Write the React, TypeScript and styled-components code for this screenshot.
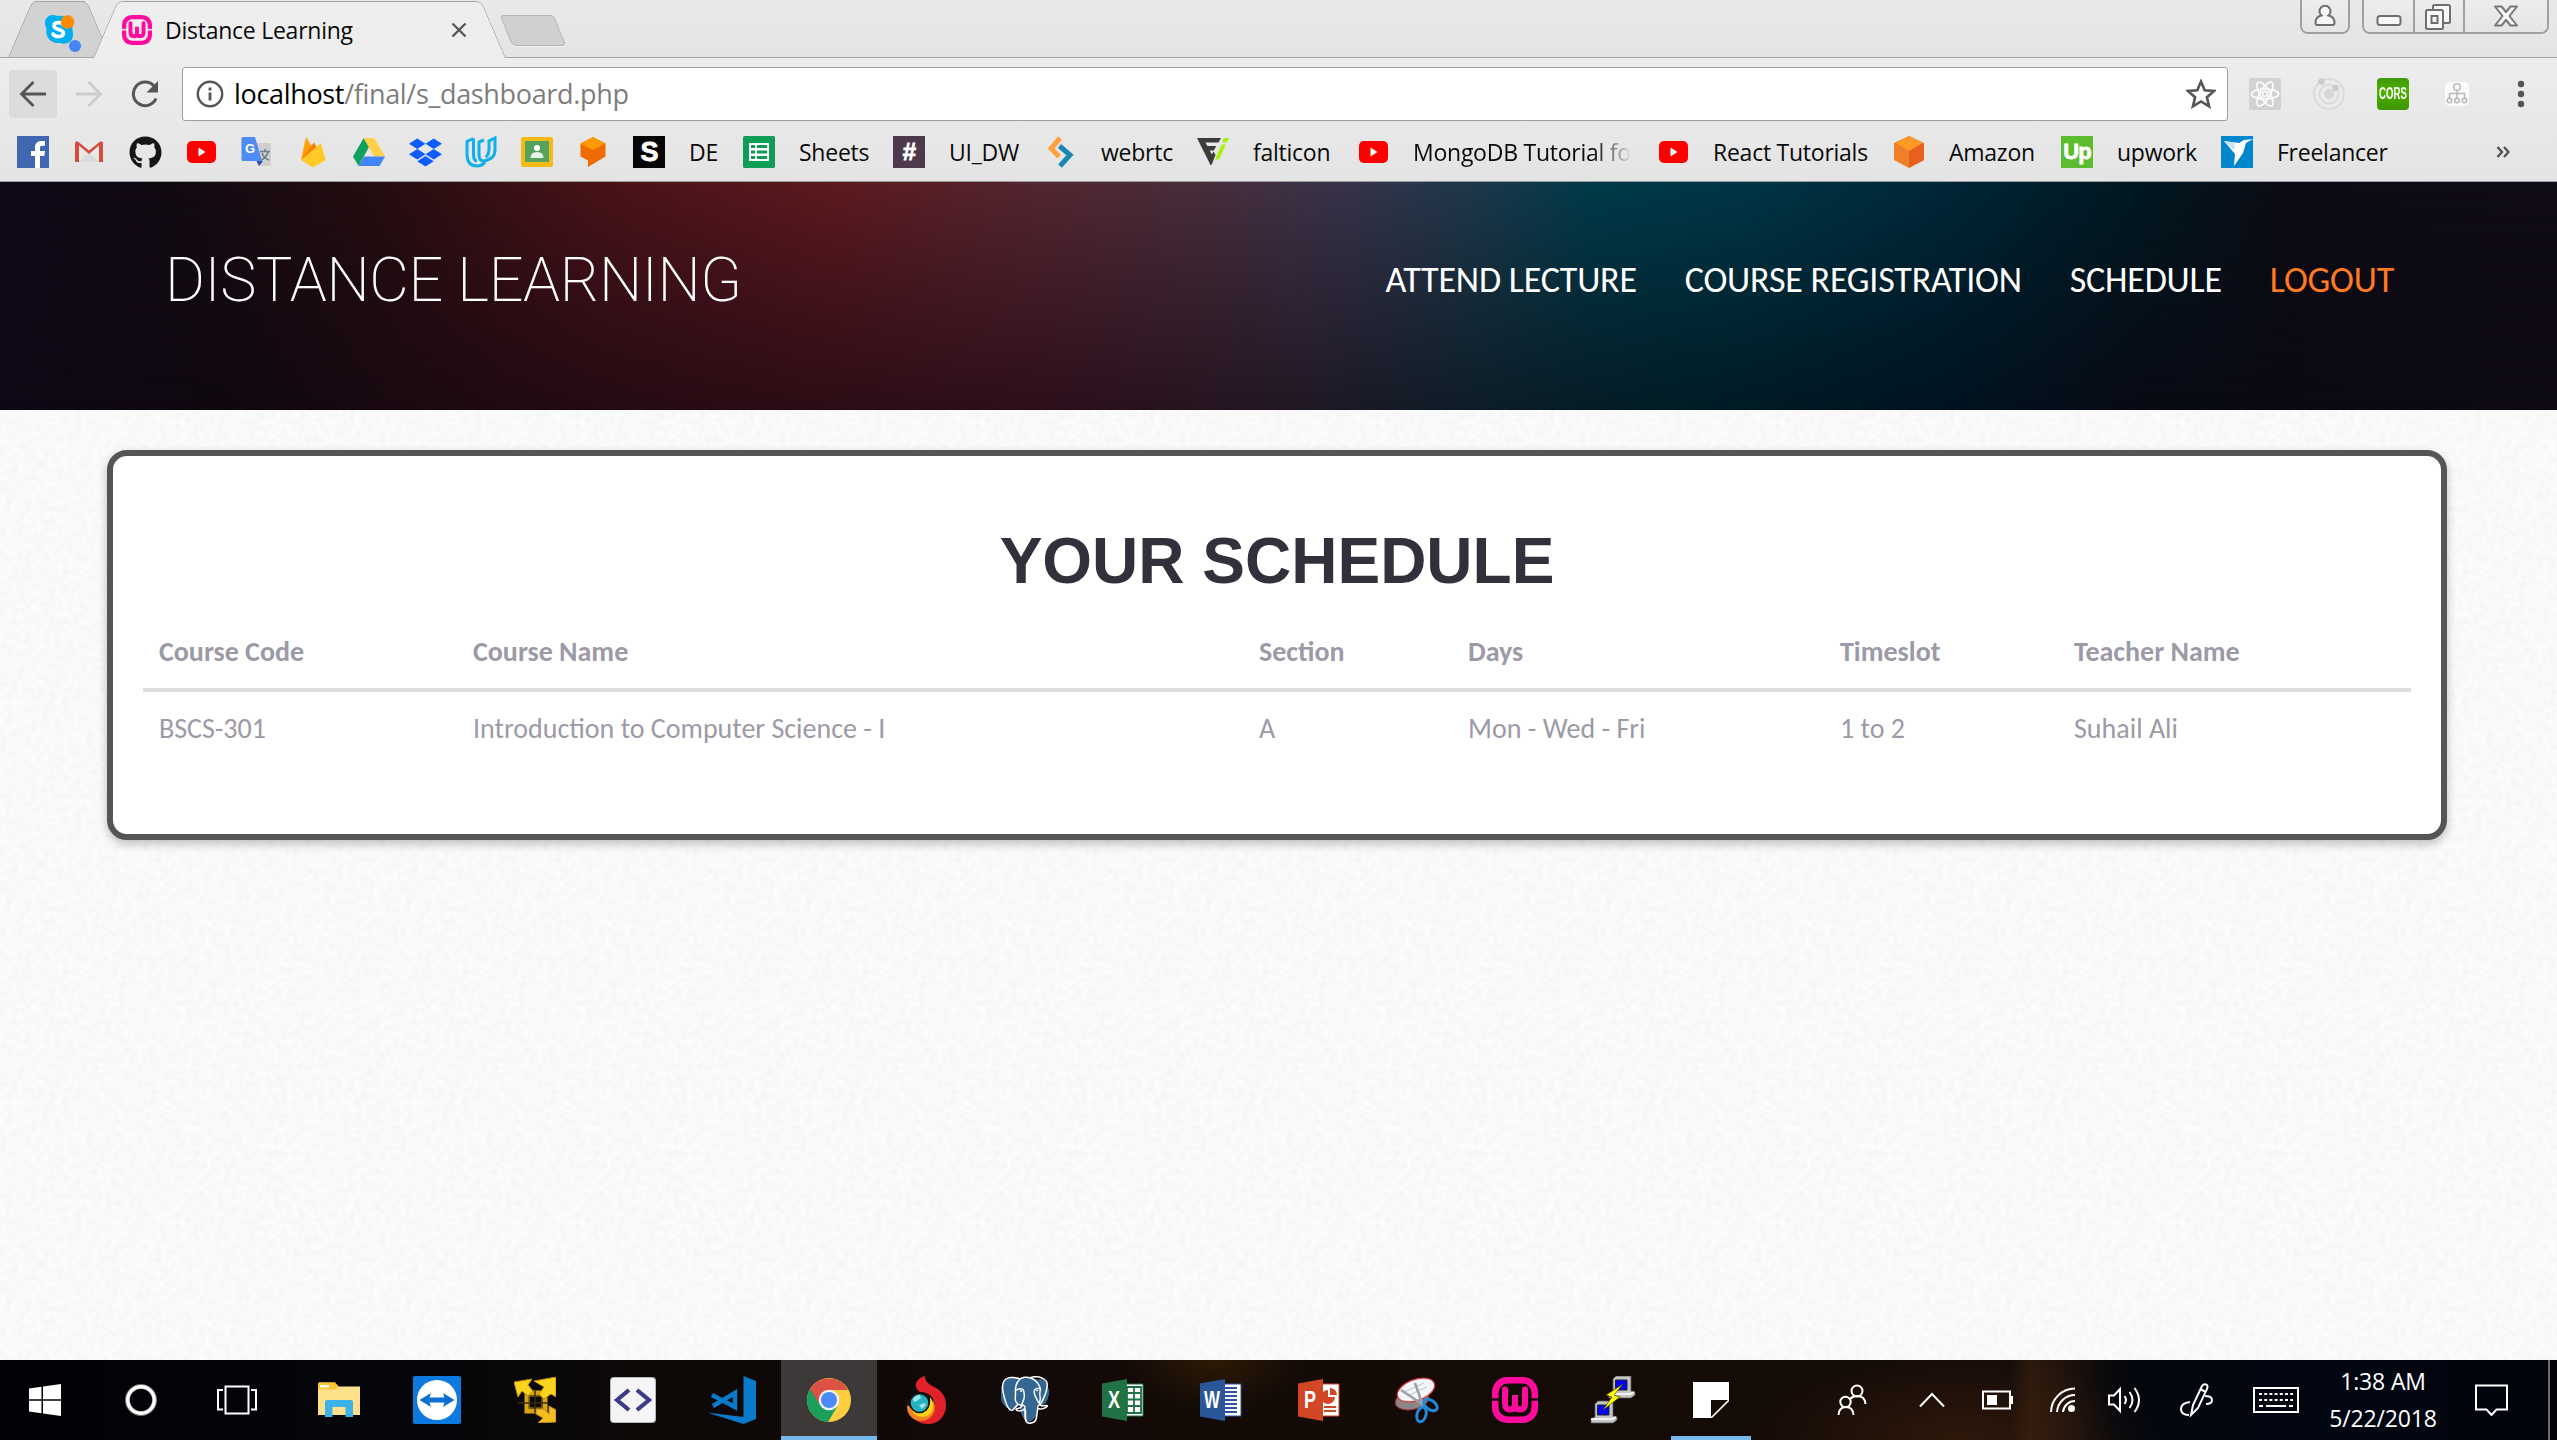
import React from "react";
import styled, { createGlobalStyle, css } from "styled-components";
import { FaGithub, FaDropbox } from "react-icons/fa";
import { SiPostgresql } from "react-icons/si";

const uiFont = `"Open Sans", "Noto Sans", sans-serif`;
const siteFont = `Carlito, Lato, sans-serif`;

const paper = `url("data:image/svg+xml,%3Csvg xmlns='http://www.w3.org/2000/svg' width='400' height='400'%3E%3Cfilter id='n'%3E%3CfeTurbulence type='fractalNoise' baseFrequency='.16' numOctaves='3' stitchTiles='stitch'/%3E%3CfeColorMatrix values='0 0 0 0 0 0 0 0 0 0 0 0 0 0 0 .05 0 0 0 -.018'/%3E%3C/filter%3E%3Crect width='400' height='400' filter='url(%23n)'/%3E%3C/svg%3E")`;

const Global = createGlobalStyle`
  * { box-sizing: border-box; }
  body { margin: 0; background: #fafafa; overflow: hidden; }
  svg { display: block; flex: none; }
`;

const Screen = styled.div`
  width: 100vw;
  height: 100vh;
  display: flex;
  flex-direction: column;
  overflow: hidden;
`;

/* ---------- browser window ---------- */

const Chrome = styled.div`
  flex: none;
  height: 182px;
  background: linear-gradient(#e9e9e9 0, #e4e4e4 57px, #ededed 58px, #e4e4e4 181px);
  border-bottom: 1px solid #999c9c;
  font: 23px/30px ${uiFont};
  letter-spacing: -0.25px;
  color: #0a0a0a;
`;

const TabStrip = styled.div`
  display: flex;
  height: 58px;
  padding-left: 8px;
  border-bottom: 1px solid #a6a6a6;
`;

const Tab = styled.div<{ $active?: boolean; $w: number }>`
  position: relative;
  z-index: ${(p) => (p.$active ? 2 : 1)};
  display: flex;
  align-items: flex-start;
  width: ${(p) => p.$w}px;
  height: ${(p) => (p.$active ? 58 : 57)}px;
  margin-left: ${(p) => (p.$active ? -17 : 0)}px;
  padding: ${(p) => (p.$active ? "15px 38px 0 29px" : "14px 0 0 36px")};

  &::before,
  &::after {
    content: "";
    position: absolute;
    z-index: -1;
    top: 1px;
    bottom: 0;
    width: calc(50% + 0.5px);
    background: ${(p) => (p.$active ? "#eeeeee" : "#d2d2d2")};
    border: 0 solid #a3a3a3;
    border-top-width: 1px;
  }
  &::before {
    left: 0;
    border-left-width: 1px;
    border-top-left-radius: 6px;
    transform: skewX(-23.2deg);
    transform-origin: 0 100%;
  }
  &::after {
    right: 0;
    border-right-width: 1px;
    border-top-right-radius: 6px;
    transform: skewX(23.2deg);
    transform-origin: 100% 100%;
  }
`;

const TabTitle = styled.span`
  flex: 1;
  margin-left: 13px;
`;

const NewTab = styled.div`
  width: 54px;
  height: 31px;
  margin: 15px 0 0 1px;
  background: #d0d0d0;
  border: 1px solid #b4b4b4;
  border-radius: 4px;
  box-shadow: 0 1px 0 #f2f2f2;
  transform: skewX(22deg);
`;

const WindowButtons = styled.div<{ $push?: boolean }>`
  display: flex;
  height: 34px;
  margin-left: ${(p) => (p.$push ? "auto" : "12px")};
  margin-right: ${(p) => (p.$push ? 0 : 8)}px;
  border: 2px solid #a0a0a0;
  border-top: 0;
  border-radius: 0 0 8px 8px;
  overflow: hidden;
`;

const WindowButton = styled.div<{ $w: number }>`
  width: ${(p) => p.$w}px;
  display: flex;
  justify-content: center;
  align-items: flex-start;
  background: linear-gradient(#ededed, #e5e5e5);
  & + & {
    border-left: 2px solid #a0a0a0;
  }
`;

const Toolbar = styled.div`
  display: flex;
  height: 72px;
  padding: 9px 4px 9px 9px;
`;

const NavButton = styled.div<{ $w: number; $lit?: boolean }>`
  display: flex;
  align-items: center;
  justify-content: center;
  width: ${(p) => p.$w}px;
  height: 48px;
  margin-top: 3px;
  border-radius: 4px;
  background: ${(p) => (p.$lit ? "#dcdcdc" : "transparent")};
`;

const Omnibox = styled.div`
  flex: 1;
  display: flex;
  align-items: center;
  height: 54px;
  margin-left: 10px;
  padding: 0 11px 0 13px;
  background: #fff;
  border: 1px solid #9e9e9e;
  border-radius: 3px;
`;

const Url = styled.div`
  flex: 1;
  margin: 0 0 0 10px;
  font-size: 27px;
  letter-spacing: -0.33px;
  color: #7d7d7d;
  b {
    font-weight: 400;
    color: #000;
  }
`;

const Extensions = styled.div`
  display: flex;
  margin-left: 5px;
`;

const Extension = styled.div`
  display: flex;
  align-items: center;
  justify-content: center;
  width: 64px;
  height: 54px;
`;

const CorsBadge = styled.div`
  width: 32px;
  height: 32px;
  border-radius: 4px;
  background: linear-gradient(#3f9a06, #4fb000 45%, #3d9502);
  color: #fff;
  font: 700 16px/32px "Liberation Sans", sans-serif;
  letter-spacing: 0;
  text-align: center;
  span {
    display: block;
    transform: scaleX(0.6);
    margin: 0 -10px;
  }
`;

const Bookmarks = styled.div`
  display: flex;
  align-items: center;
  height: 44px;
  padding: 0 0 0 17px;
`;

const Bookmark = styled.div<{ $w: number }>`
  flex: none;
  display: flex;
  align-items: center;
  gap: 24px;
  width: ${(p) => p.$w}px;
`;

const BookmarkIcon = styled.span`
  flex: none;
  display: flex;
  align-items: center;
  justify-content: center;
  width: 32px;
  height: 32px;
`;

const BookmarkLabel = styled.span<{ $fade?: boolean }>`
  margin-top: -1px;
  white-space: nowrap;
  ${(p) =>
    p.$fade &&
    css`
      mask-image: linear-gradient(90deg, #000 180px, transparent 219px);
    `}
`;

const Tile = styled.span<{ $bg: string; $size?: number }>`
  width: 32px;
  height: 32px;
  background: ${(p) => p.$bg};
  color: #fff;
  font: 700 ${(p) => p.$size ?? 27}px/32px "Liberation Sans", sans-serif;
  letter-spacing: -1px;
  text-align: center;
  -webkit-text-stroke: 0.8px #fff;
`;

const Overflow = styled.span`
  margin-left: auto;
  padding-right: 47px;
`;

/* ---------- site ---------- */

const Page = styled.main`
  flex: 1;
  background: ${paper} #fbfbfb;
`;

const Masthead = styled.header`
  position: relative;
  display: flex;
  justify-content: space-between;
  height: 228px;
  padding: 66px 163px 0 165px;
  background: linear-gradient(
    90deg,
    #0f0816 0,
    #100810 230px,
    #200a12 500px,
    #2c0c15 800px,
    #2d0f1b 1040px,
    #221724 1290px,
    #0c1d28 1480px,
    #001c25 1700px,
    #001320 1950px,
    #090a14 2140px,
    #0e0a14 2557px
  );
  &::before {
    content: "";
    position: absolute;
    inset: 0;
    background: linear-gradient(
      90deg,
      #0f0818 0,
      #120a12 180px,
      #250d10 380px,
      #481318 600px,
      #5c1a1f 840px,
      #55242d 1000px,
      #472e3c 1210px,
      #38334a 1340px,
      #1c384a 1480px,
      #003a4a 1590px,
      #003546 1750px,
      #002838 1930px,
      #001821 2140px,
      #0d0b13 2290px,
      #100c17 2557px
    );
    mask-image: linear-gradient(#000, rgba(0, 0, 0, 0.5) 48%, transparent);
  }
`;

const Brand = styled.h1`
  position: relative;
  margin: 0;
  font: 200 61px/64px Roboto, sans-serif;
  color: #fff;
  letter-spacing: -0.35px;
`;

const Menu = styled.nav`
  position: relative;
  display: flex;
  gap: 48px;
  font: 36px/64px ${siteFont};
`;

const MenuLink = styled.a<{ $accent?: boolean }>`
  color: ${(p) => (p.$accent ? "#ff7a22" : "#fff")};
  letter-spacing: -0.2px;
`;

const Card = styled.section`
  height: 390px;
  margin: 40px 110px 0 107px;
  padding: 69px 30px 0;
  background: #fff;
  border: 6px solid #555;
  border-radius: 20px;
  box-shadow: 0 4px 10px rgba(0, 0, 0, 0.24);
`;

const CardTitle = styled.h2`
  margin: 0 0 21px;
  font: 700 64px/72px "Liberation Sans", Arial, sans-serif;
  text-align: center;
  color: #32303a;
`;

const Row = styled.div<{ $head?: boolean }>`
  display: grid;
  grid-template-columns: 314px 786px 209px 372px 234px 1fr;
  padding-bottom: ${(p) => (p.$head ? 3 : 0)}px;
  font: ${(p) => (p.$head ? 700 : 400)} 28px/${(p) => (p.$head ? 67 : 74)}px ${siteFont};
  color: #9c9aa6;
  border-bottom: ${(p) => (p.$head ? "4px solid #ddd" : "0")};
`;

const Cell = styled.div`
  padding-left: 16px;
`;

/* ---------- taskbar ---------- */

const Taskbar = styled.footer`
  flex: none;
  display: flex;
  height: 80px;
  background:
    radial-gradient(200px 80px at 1960px 80px, rgba(74, 36, 14, 0.45), transparent),
    linear-gradient(90deg, transparent 2010px, rgba(100, 56, 18, 0.32) 2030px, rgba(80, 40, 12, 0.25) 2070px, transparent 2110px),
    radial-gradient(90px 50px at 1215px 0, rgba(60, 36, 5, 0.6), transparent),
    linear-gradient(90deg, #000206 0, #04060a 400px, #0b0807 600px, #130a07 1100px, #150b06 1700px, #170d09 2000px, #05070d 2130px, #010612 2350px, #02040a 2557px);
`;

const TaskButton = styled.div<{ $w?: number; $active?: boolean; $first?: boolean }>`
  flex: none;
  display: flex;
  align-items: center;
  justify-content: center;
  width: ${(p) => p.$w ?? 98}px;
  height: 80px;
  margin-left: ${(p) => (p.$first ? 8 : 0)}px;
  ${(p) =>
    p.$active &&
    css`
      background: linear-gradient(#3c3938 76px, #76b9ed 76px);
      border: solid transparent;
      border-width: 0 1px;
      background-clip: padding-box;
    `}
`;

const RunningButton = styled(TaskButton)`
  background: linear-gradient(#76b9ed, #76b9ed) 9px 76px / 80px 4px no-repeat;
`;

const Tray = styled.div`
  display: flex;
  margin-left: 52px;
  flex: 1;
`;

const Clock = styled.div`
  display: flex;
  flex-direction: column;
  justify-content: center;
  width: 160px;
  padding-right: 2px;
  text-align: center;
  color: #fff;
  font: 23px/37px ${uiFont};
  letter-spacing: -0.15px;
`;

const ShowDesktop = styled.div`
  width: 9px;
  margin-left: auto;
  border-left: 2px solid #6c6c70;
`;

/* ---------- icons ---------- */

const Skype = () => (
  <svg width="38" height="40" viewBox="0 0 38 40">
    <path d="M1 9C1 3 7-1 13 2c9-2 16 5 15.500 14 1 3 1 10-3 12-3 2-7 2-9 1C8 30 1 24 2.500 15 1.500 13 1 11 1 9z" fill="#00aff0" />
    <path d="M19.500 11c-1-3-9.500-3.500-9.500.8 0 4.700 9.500 2.700 9.500 7.500 0 4-8.500 4.200-10.500.7" fill="none" stroke="#fff" strokeWidth="3.600" strokeLinecap="round" />
    <circle cx="23.500" cy="8" r="6.800" fill="#ff8c00" />
    <circle cx="31" cy="32" r="6" fill="#4285f4" />
  </svg>
);

const Wamp = ({ w, h, back }: { w: number; h: number; back: string }) => (
  <svg width={w} height={h} viewBox="0 0 46 46" preserveAspectRatio="none">
    <rect width="46" height="46" rx="15" fill="#ff0c9f" />
    <rect x="6.500" y="6.500" width="33" height="33" rx="9" fill={back} />
    <path d="M0 22.500h46" stroke={back} strokeWidth="2.500" />
    <path d="M13 12.500v14q0 6 5 6t5-5V18v9.500q0 5 5 5t5-6v-14" fill="none" stroke="#ff0c9f" strokeWidth="6" strokeLinecap="round" />
  </svg>
);

const Close = () => (
  <svg width="16" height="16" viewBox="0 0 16 16">
    <path d="M1.500 1.500l13 13M14.500 1.500l-13 13" stroke="#555" strokeWidth="2.300" />
  </svg>
);

const TabClose = styled.span`
  margin-top: 7px;
`;

const UserGlyph = () => (
  <svg width="22" height="28" viewBox="0 0 22 28">
    <path d="M7.500 15.500a5.500 5.500 0 1 1 7 0c4 .8 6 3 6 7.500q0 2-2 2h-15q-2 0-2-2c0-4.500 2-6.700 6-7.500z" fill="#f6f6f6" stroke="#6f6f6f" strokeWidth="2" />
  </svg>
);
const MinGlyph = () => (
  <svg width="26" height="28" viewBox="0 0 26 28">
    <rect x="1.500" y="16" width="23" height="9" rx="2.500" fill="#f8f8f8" stroke="#6f6f6f" strokeWidth="2" />
  </svg>
);
const RestoreGlyph = () => (
  <svg width="28" height="32" viewBox="0 0 28 32">
    <g fill="#f8f8f8" stroke="#6f6f6f" strokeWidth="2">
      <rect x="8" y="5" width="17" height="18" rx="1.500" />
      <rect x="1" y="10" width="17" height="19" rx="1.500" />
      <rect x="6.500" y="16" width="6" height="7" />
    </g>
  </svg>
);
const XGlyph = () => (
  <svg width="26" height="28" viewBox="0 0 26 28">
    <path d="M2 6.500h6.500L13 12l4.500-5.500H24l-7.500 9.500L24 25.500h-6.500L13 20l-4.500 5.500H2L9.500 16z" fill="#f8f8f8" stroke="#777" strokeWidth="2" strokeLinejoin="round" />
  </svg>
);

const Arrow = ({ color, flip }: { color: string; flip?: boolean }) => (
  <svg width="28" height="28" viewBox="0 0 28 28">
    <path d={flip ? "M1 14h24M13.500 2l12 12-12 12" : "M27 14H3M14.500 2l-12 12 12 12"} fill="none" stroke={color} strokeWidth="2.800" />
  </svg>
);
const Reload = () => (
  <svg width="32" height="28" viewBox="0 0 32 28">
    <path d="M25 18.500A11.800 11.800 0 1 1 23 6" fill="none" stroke="#555" strokeWidth="3" />
    <path d="M27 1v11.500H15.500z" fill="#555" />
  </svg>
);
const Info = () => (
  <svg width="28" height="28" viewBox="0 0 28 28">
    <circle cx="14" cy="14" r="12.200" fill="none" stroke="#555" strokeWidth="2.400" />
    <path d="M14 12.500v8M14 7.500v3" stroke="#555" strokeWidth="2.800" />
  </svg>
);
const Star = () => (
  <svg width="30" height="30" viewBox="0 0 30 30">
    <path d="M15 2.500l3.700 8.700 9.300.8-7.100 6.200 2.200 9.200-8.100-4.900-8.100 4.900 2.200-9.200L2 12l9.300-.8z" fill="none" stroke="#555" strokeWidth="2.600" />
  </svg>
);
const ReactExt = () => (
  <svg width="32" height="32" viewBox="0 0 32 32">
    <rect width="32" height="32" rx="2" fill="#d2d2d2" />
    <g fill="none" stroke="#fff" strokeWidth="1.600">
      <ellipse cx="16" cy="16" rx="13.500" ry="5" />
      <ellipse cx="16" cy="16" rx="13.500" ry="5" transform="rotate(60 16 16)" />
      <ellipse cx="16" cy="16" rx="13.500" ry="5" transform="rotate(120 16 16)" />
      <circle cx="16" cy="16" r="2.500" />
    </g>
  </svg>
);
const Orbit = () => (
  <svg width="32" height="32" viewBox="0 0 32 32">
    <g fill="none" stroke="#d8d8d8" strokeWidth="1.600">
      <circle cx="16" cy="16" r="15" />
      <circle cx="16" cy="16" r="9.500" />
    </g>
    <circle cx="16" cy="16" r="5" fill="#d6d6d6" />
    <circle cx="8.500" cy="3.500" r="3.200" fill="#cbcbcb" />
    <circle cx="22.500" cy="10" r="3.200" fill="#cbcbcb" />
  </svg>
);
const Sitemap = () => (
  <svg width="24" height="24" viewBox="0 0 24 24">
    <rect width="24" height="24" rx="5" fill="#fbfbfb" />
    <g fill="none" stroke="#b8b8b8" strokeWidth="1.500">
      <circle cx="12" cy="5" r="3.300" />
      <path d="M12 8v8M4.500 16v-4.500h15V16" />
      <circle cx="4.500" cy="18.500" r="2.300" />
      <circle cx="12" cy="18.500" r="2.300" />
      <circle cx="19.500" cy="18.500" r="2.300" />
    </g>
  </svg>
);
const Dots = () => (
  <svg width="8" height="28" viewBox="0 0 8 28" fill="#555">
    <circle cx="4" cy="4" r="3.200" />
    <circle cx="4" cy="14" r="3.200" />
    <circle cx="4" cy="24" r="3.200" />
  </svg>
);
const Chevrons = () => (
  <svg width="14" height="12" viewBox="0 0 14 12">
    <path d="M1.500 1l4.500 5-4.500 5M8 1l4.500 5L8 11" fill="none" stroke="#505050" strokeWidth="2.300" />
  </svg>
);

const Facebook = () => (
  <svg width="32" height="32" viewBox="0 0 32 32">
    <path d="M0 0h32v32H0z" fill="#4267b2" />
    <path d="M18 32V20h-4v-5h4v-3.500C18 7.500 20.400 5 24.500 5H28v4.800h-2.500c-2 0-2.500.8-2.500 2.400V15h5l-.7 5H23v12z" fill="#fff" />
  </svg>
);
const Gmail = () => (
  <svg width="30" height="22" viewBox="0 0 30 22">
    <path d="M1 1h28v20H1z" fill="#e9e9e9" />
    <path d="M4 21l11-9 11 9z" fill="#dcdcdc" />
    <path d="M5 21V4.500L15 13 25 4.500V21h4V2q0-1.500-1.500-1.500h-1.300L15 9.500 3.800.500H2.500Q1 .500 1 2v19z" fill="#d54b3d" />
  </svg>
);
const YouTube = () => (
  <svg width="29" height="22" viewBox="0 0 29 22">
    <rect width="29" height="22" rx="5" fill="#f00" />
    <path d="M11.500 6.500v9l7-4.500z" fill="#fff" />
  </svg>
);
const TranslateWord = styled.text`
  font: 700 13px "Liberation Sans", sans-serif;
  fill: #fff;
`;
const Translate = () => (
  <svg width="32" height="32" viewBox="0 0 32 32">
    <path d="M10 7h18q2 0 2 2v19q0 2-2 2H18z" fill="#d0d0d0" />
    <path d="M19 15.500h10M24 13v3M27 16c-1 4-4 6.500-6.500 8M21 17c1 3 4 6 7 7" fill="none" stroke="#6a8089" strokeWidth="1.600" />
    <path d="M15.500 25H22l-4 5z" fill="#3949ab" />
    <path d="M2 1h12l7 24H2q-1.500 0-1.500-1.500v-21Q.500 1 2 1z" fill="#4f8af5" />
    <TranslateWord x="4" y="17">G</TranslateWord>
  </svg>
);
const Firebase = () => (
  <svg width="26" height="32" viewBox="0 0 26 32">
    <path d="M1 24L6 1l6 10z" fill="#ffa000" />
    <path d="M1 24L14 6.500l4 7z" fill="#f57c00" />
    <path d="M1 24L21 7l4.500 17L14 31q-1 .5-2 0z" fill="#ffca28" />
  </svg>
);
const Drive = () => (
  <svg width="32" height="28" viewBox="0 0 32 28">
    <path d="M10.700 0L16 9 5.500 28 0 18.600z" fill="#11a15e" />
    <path d="M10.700 0h10.600L32 18.600H21z" fill="#ffcf48" />
    <path d="M5.500 28L11 18.600h21L26.500 28z" fill="#4285f4" />
  </svg>
);
const Udacity = () => (
  <svg width="32" height="32" viewBox="0 0 32 32">
    <path d="M8.500 2.500L2 5.500V18q0 12 10 12 5 0 8-4M8.500 2.500V18q0 7 3.500 7" fill="none" stroke="#12b0e8" strokeWidth="3" />
    <path d="M19 4l-5 2v13q0 6 5 6 11-2 11-11V2l-6 3v8q0 6-3.500 8" fill="none" stroke="#12b0e8" strokeWidth="3" />
  </svg>
);
const Classroom = () => (
  <svg width="32" height="30" viewBox="0 0 32 30">
    <rect width="32" height="30" rx="2" fill="#f5ba15" />
    <rect x="4" y="4" width="24" height="21" fill="#57a35c" />
    <circle cx="16" cy="11" r="3" fill="#fff" />
    <path d="M9.500 21q0-6 6.500-6t6.500 6z" fill="#e9f4ea" />
  </svg>
);
const AwsEducate = () => (
  <svg width="26" height="30" viewBox="0 0 26 30">
    <path d="M13 0l12.500 6.500v13L8 30v-6.500l-7.500-4v-13z" fill="#ee6b00" />
    <path d="M13 0l12.500 6.500L13 13 .5 6.500z" fill="#ff9900" />
  </svg>
);
const AmazonCube = () => (
  <svg width="32" height="32" viewBox="0 0 32 32">
    <path d="M16 0l15 7v17l-15 8L1 24V7z" fill="#f08028" />
    <path d="M16 14l15-7v17l-15 8z" fill="#e8601e" />
    <path d="M16 0l13 7-13 8L3 7z" fill="#ff9a26" />
  </svg>
);
const Sheets = () => (
  <svg width="32" height="32" viewBox="0 0 32 32">
    <rect width="32" height="32" rx="1.500" fill="#0f9d58" />
    <path d="M6 7h20v18H6z" fill="#fff" />
    <path d="M8 9h4v3H8zM14 9h10v3H14zM8 14.500h4v3H8zM14 14.500h10v3H14zM8 20h4v3H8zM14 20h10v3H14z" fill="#0f9d58" />
  </svg>
);
const Webrtc = () => (
  <svg width="26" height="32" viewBox="0 0 26 32">
    <path d="M12 2L3 12.500l8 8" fill="none" stroke="#ff9f40" strokeWidth="5" />
    <path d="M11.500 10l10.500 9-10 11" fill="none" stroke="#1b87b0" strokeWidth="5" />
  </svg>
);
const Flaticon = () => (
  <svg width="32" height="28" viewBox="0 0 32 28">
    <path d="M0 0h24l-2.500 4.500H8.500l1.800 3.500h9l-2.500 4.500h-4l2 4 1.700-3 2 3.500-4 10h-1z" fill="#3c3c3c" />
    <path d="M27 0h5l-2 4.500h-5zM24.500 6.500h4.500l-7 15h-4z" fill="#a6f20e" />
  </svg>
);
const Bird = () => (
  <svg width="32" height="32" viewBox="0 0 32 32">
    <path d="M0 0h32v32H0z" fill="#0087cd" />
    <path d="M3 5l15 2 5-3 9-1-7 4-3 10-9 13 1-12z" fill="#fff" />
    <path d="M3 5l11 2-1 7z" fill="#c8e4f4" />
  </svg>
);

const Windows = () => (
  <svg width="32" height="32" viewBox="0 0 32 32" fill="#fff">
    <path d="M0 4.500L12.500 2.700V15.300H0zM14 2.500L32 0v15.300H14zM0 16.700h12.500v12.600L0 27.500zM14 16.700h18V32l-18-2.500z" />
  </svg>
);
const Ring = () => (
  <svg width="34" height="34" viewBox="0 0 34 34">
    <circle cx="17" cy="17" r="13.500" fill="none" stroke="#777" strokeWidth="5" />
    <circle cx="17" cy="17" r="13.300" fill="none" stroke="#fff" strokeWidth="3.400" />
  </svg>
);
const TaskView = () => (
  <svg width="42" height="30" viewBox="0 0 42 30" fill="none" stroke="#fff" strokeWidth="2">
    <path d="M9.500 1.500h23v27h-23zM7 5H2v19.500h5M35 5h5v19.500h-5" />
  </svg>
);
const Explorer = () => (
  <svg width="42" height="36" viewBox="0 0 42 36">
    <path d="M0 33V2q0-1.500 1.500-1.500H17l3.500 4H42V33z" fill="#ffe08a" />
    <path d="M0 7V2Q0 .5 1.500.5H17l3 4-2.500 3z" fill="#fcc42e" />
    <path d="M2 3h9v2.500H2z" fill="#fff" />
    <path d="M7 35V20q0-2 2-2h24q2 0 2 2v15h-7.500V25h-13v10z" fill="#3bb3ea" />
  </svg>
);
const TeamViewer = () => (
  <svg width="48" height="48" viewBox="0 0 48 48">
    <rect width="48" height="48" rx="2" fill="#0c7ade" />
    <circle cx="24" cy="24" r="20" fill="#fff" />
    <path d="M6.500 24l11.500-7-1.500 4.500h15L30 17l11.500 7L30 31l1.500-4.500h-15L18 31z" fill="#0a6fd0" />
  </svg>
);
const YellowArrows = () => (
  <svg width="42" height="46" viewBox="0 0 42 46">
    <path d="M13 16h18v18H13z" fill="none" stroke="#d9a411" strokeWidth="5" />
    <path d="M15 19h13v12H15z" fill="none" stroke="#7c5a0a" strokeWidth="1.500" />
    <g fill="#fbd51d" stroke="#c08a0a" strokeWidth="1">
      <path d="M0 5l18-3-4 6 5 6-5 5-6-5-4 6z" />
      <path d="M20 4L42 0v20l-5-3-7 5-5-5 5-7z" />
      <path d="M35 29l7 4v12l-18 1 5-5-7-4v-5h8l5 5z" fill="#f6bd22" />
    </g>
    <path d="M4 26h30M21 14v22" stroke="#3a2a06" strokeWidth="1.500" />
  </svg>
);
const CodeTile = () => (
  <svg width="46" height="46" viewBox="0 0 46 46">
    <rect x=".5" y=".5" width="45" height="45" rx="3" fill="#f5f5f7" stroke="#b9b9bd" />
    <path d="M19 13L7 23l12 10M27 13l12 10-12 10" fill="none" stroke="#3c3b86" strokeWidth="4.200" />
  </svg>
);
const VSCode = () => (
  <svg width="49" height="48" viewBox="0 0 49 48">
    <path d="M36.500 0L49 5v38l-12.500 5L0 36.500l36.500 4.500z" fill="#0a7bcc" />
    <path d="M5 19l23 12V17L6 30" fill="none" stroke="#0a7bcc" strokeWidth="4.500" />
  </svg>
);
const ChromeLogo = () => (
  <svg width="44" height="44" viewBox="0 0 44 44">
    <circle cx="22" cy="22" r="22" fill="#ffcd40" />
    <path d="M22 22L3 11A22 22 0 0 0 21 44l9-15z" fill="#1a9f5c" />
    <path d="M22 22l-9 5L3 11A22 22 0 0 1 41.200 12H22z" fill="#de5246" />
    <circle cx="22" cy="22" r="10.300" fill="#f2f2f2" />
    <circle cx="22" cy="22" r="8" fill="#4a8af4" />
  </svg>
);
const Torch = () => (
  <svg width="40" height="48" viewBox="0 0 40 48">
    <path d="M18 0C10 2 7 8 10 13c3 5 10 5 14 10 4 6 2 13-4 18L4 38c4 7 10 10 17 10 11 0 18-8 18-19 0-9-5-15-12-18-6-3-9-6-9-11z" fill="#e2222a" />
    <circle cx="14" cy="30" r="14" fill="#17100b" />
    <path d="M0 31a14 14 0 0 0 28 0q0-4-2-7 0 10-8 13-10 3-16-7-2-2-2 1z" fill="#f58220" />
    <path d="M4 33q4 8 12 8 8-1 10-8 1-7-3-12 1 8-3 12-7 6-16 0z" fill="#ffd013" />
    <circle cx="12.500" cy="27" r="9.500" fill="#23b3c4" stroke="#17100b" strokeWidth="1.500" />
    <path d="M6 23q3-4 7-4l1 3-4 3-3 1zM12 29l5-2 2 2-4 4z" fill="#9fe3e4" />
  </svg>
);
const Elephant = styled(SiPostgresql)`
  color: #fff;
  background: radial-gradient(ellipse 44% 26% at 50% 28%, #336791 96%, transparent), radial-gradient(ellipse 20% 42% at 58% 54%, #336791 96%, transparent), radial-gradient(ellipse 24% 34% at 22% 36%, #336791 96%, transparent), radial-gradient(ellipse 18% 28% at 82% 34%, #336791 96%, transparent);
`;
const OfficeLetter = styled.text`
  font: 700 23px "Liberation Sans", sans-serif;
  fill: #fff;
  text-anchor: middle;
`;
const Office = ({ color, letter, children }: { color: string; letter: string; children: React.ReactNode }) => (
  <svg width="42" height="42" viewBox="0 0 42 42">
    <path d="M24 5h17v32H24z" fill="#fff" stroke={color} strokeWidth="1" />
    {children}
    <path d="M0 4.500L25 0v42L0 37.500z" fill={color} />
    <OfficeLetter x="12" y="29" textLength={letter === "W" ? 16 : 12} lengthAdjust="spacingAndGlyphs">
      {letter}
    </OfficeLetter>
  </svg>
);
const Snip = () => (
  <svg width="44" height="48" viewBox="0 0 44 48">
    <ellipse cx="17" cy="24" rx="17" ry="9.500" fill="#8b8786" stroke="#a3302c" transform="rotate(-12 17 24)" />
    <ellipse cx="21" cy="14" rx="19.500" ry="10.500" fill="#f3f5f8" stroke="#d8383a" strokeWidth="1.200" transform="rotate(-20 21 14)" />
    <path d="M9 16l20-9M12 20l20-9" stroke="#c0c4ca" />
    <path d="M6 14l21 14M20 7l8 23" stroke="#9ba1aa" strokeWidth="2.500" />
    <g fill="none" stroke="#2089d8" strokeWidth="3">
      <ellipse cx="35.500" cy="29" rx="7.500" ry="4.500" transform="rotate(35 35.500 29)" />
      <ellipse cx="26.500" cy="38.500" rx="4.500" ry="7.500" transform="rotate(15 26.500 38.500)" />
    </g>
  </svg>
);
const Putty = () => (
  <svg width="46" height="48" viewBox="0 0 46 48">
    {[
      [22, 0],
      [4, 25],
    ].map(([x, y]) => (
      <g key={x} transform={`translate(${x} ${y})`}>
        <path d="M1 3l3-3h15v15l4 1v3l-4 3H-3v-4l4-2z" fill="#c5c5c5" stroke="#555" strokeWidth=".8" />
        <path d="M3.500 4h11.500v10H3.500z" fill="#0404ee" stroke="#222" />
        <path d="M-3 18h21l4-2" fill="none" stroke="#fff" strokeWidth="1.500" />
      </g>
    ))}
    <path d="M33 8L16 19l6 2-9 13 17-13-6-2z" fill="#ffff10" stroke="#444400" strokeWidth=".7" />
  </svg>
);
const Sticky = () => (
  <svg width="36" height="36" viewBox="0 0 36 36">
    <path d="M0 0h36v18H18v18H0z" fill="#fff" />
    <path d="M36 19v17H19z" fill="#150c07" />
    <path d="M18 36L36 18" stroke="#fff" strokeWidth="1.600" />
  </svg>
);

const line = { fill: "none", stroke: "#fff", strokeWidth: 2 } as const;
const People = () => (
  <svg width="30" height="32" viewBox="0 0 30 32" {...line}>
    <circle cx="20" cy="7" r="5.500" />
    <path d="M13 15q3-3 7-3 8 0 8.500 8M1.500 31q.5-8 7.500-8t7.500 8" />
    <circle cx="8.500" cy="18" r="5.200" />
  </svg>
);
const Caret = () => (
  <svg width="26" height="16" viewBox="0 0 26 16" {...line}>
    <path d="M1 14.500L13 2l12 12.500" />
  </svg>
);
const Battery = () => (
  <svg width="31" height="20" viewBox="0 0 31 20" {...line}>
    <path d="M1 1.500h27v17H1zM30 6v8" />
    <path d="M5 5h10v10H5z" fill="#fff" stroke="none" />
  </svg>
);
const Wifi = () => (
  <svg width="26" height="26" viewBox="0 0 26 26" {...line}>
    <path d="M1 25A24 24 0 0 1 25 1.500M7 25A18 18 0 0 1 25 8M13 25a12 12 0 0 1 12-11" />
    <circle cx="21.500" cy="21.500" r="3.500" fill="#fff" stroke="none" />
  </svg>
);
const Volume = () => (
  <svg width="32" height="30" viewBox="0 0 32 30" {...line}>
    <path d="M1 10.500h5L12 4v22l-6-6.500H1zM16.500 11q3 4 0 8M21.500 7q6 8 0 16M26.500 3q9 12 0 24" />
  </svg>
);
const Pen = () => (
  <svg width="33" height="34" viewBox="0 0 33 34" {...line}>
    <path d="M11 32l2-10 9-19q2-3 5-1 1 1 0 4l-9 19zM20 6l6 3M10 19q-9 1-9 7 0 6 8 6M25 13q7 0 7 4 0 4-6 4" />
  </svg>
);
const Keyboard = () => (
  <svg width="46" height="26" viewBox="0 0 46 26" {...line}>
    <path d="M1 1h44v24H1z" />
    <path d="M6 7h34M6 13h34" strokeDasharray="3 2.200" />
    <path d="M6 19h4M13 19h20M36 19h4" />
  </svg>
);
const Notice = () => (
  <svg width="33" height="32" viewBox="0 0 33 32" {...line}>
    <path d="M1 1.500h31v24H21.500L16.500 31l-5-5.500H1z" />
  </svg>
);

/* ---------- data ---------- */

const bookmarks: { icon: React.ReactNode; label?: string; w: number; fade?: boolean }[] = [
  { icon: <Facebook />, w: 56 },
  { icon: <Gmail />, w: 56 },
  { icon: <FaGithub size={33} color="#151515" />, w: 56 },
  { icon: <YouTube />, w: 56 },
  { icon: <Translate />, w: 56 },
  { icon: <Firebase />, w: 56 },
  { icon: <Drive />, w: 56 },
  { icon: <FaDropbox size={33} color="#0c5cff" />, w: 56 },
  { icon: <Udacity />, w: 56 },
  { icon: <Classroom />, w: 56 },
  { icon: <AwsEducate />, w: 56 },
  { icon: <Tile $bg="#060606">S</Tile>, label: "DE", w: 110 },
  { icon: <Sheets />, label: "Sheets", w: 150 },
  { icon: <Tile $bg="#4d394b" $size={24}>#</Tile>, label: "UI_DW", w: 152 },
  { icon: <Webrtc />, label: "webrtc", w: 152 },
  { icon: <Flaticon />, label: "falticon", w: 160 },
  { icon: <YouTube />, label: "MongoDB Tutorial for", w: 300, fade: true },
  { icon: <YouTube />, label: "React Tutorials", w: 236 },
  { icon: <AmazonCube />, label: "Amazon", w: 168 },
  { icon: <Tile $bg="#5bbc2f" $size={22}>Up</Tile>, label: "upwork", w: 160 },
  { icon: <Bird />, label: "Freelancer", w: 170 },
];

const head = ["Course Code", "Course Name", "Section", "Days", "Timeslot", "Teacher Name"];
const lecture = ["BSCS-301", "Introduction to Computer Science - I", "A", "Mon - Wed - Fri", "1 to 2", "Suhail Ali"];

export default function App() {
  return (
    <Screen>
      <Global />
      <Chrome>
        <TabStrip>
          <Tab $w={102}>
            <Skype />
          </Tab>
          <Tab $active $w={412}>
            <Wamp w={30} h={30} back="#eeeeee" />
            <TabTitle>Distance Learning</TabTitle>
            <TabClose>
              <Close />
            </TabClose>
          </Tab>
          <NewTab />
          <WindowButtons $push>
            <WindowButton $w={46}>
              <UserGlyph />
            </WindowButton>
          </WindowButtons>
          <WindowButtons>
            <WindowButton $w={49}>
              <MinGlyph />
            </WindowButton>
            <WindowButton $w={50}>
              <RestoreGlyph />
            </WindowButton>
            <WindowButton $w={84}>
              <XGlyph />
            </WindowButton>
          </WindowButtons>
        </TabStrip>
        <Toolbar>
          <NavButton $w={48} $lit>
            <Arrow color="#555" />
          </NavButton>
          <NavButton $w={64}>
            <Arrow color="#cccccc" flip />
          </NavButton>
          <NavButton $w={51}>
            <Reload />
          </NavButton>
          <Omnibox>
            <Info />
            <Url>
              <b>localhost</b>/final/s_dashboard.php
            </Url>
            <Star />
          </Omnibox>
          <Extensions>
            <Extension>
              <ReactExt />
            </Extension>
            <Extension>
              <Orbit />
            </Extension>
            <Extension>
              <CorsBadge>
                <span>CORS</span>
              </CorsBadge>
            </Extension>
            <Extension>
              <Sitemap />
            </Extension>
            <Extension>
              <Dots />
            </Extension>
          </Extensions>
        </Toolbar>
        <Bookmarks>
          {bookmarks.map((b, i) => (
            <Bookmark key={i} $w={b.w}>
              <BookmarkIcon>{b.icon}</BookmarkIcon>
              {b.label && <BookmarkLabel $fade={b.fade}>{b.label}</BookmarkLabel>}
            </Bookmark>
          ))}
          <Overflow>
            <Chevrons />
          </Overflow>
        </Bookmarks>
      </Chrome>

      <Page>
        <Masthead>
          <Brand>DISTANCE LEARNING</Brand>
          <Menu>
            <MenuLink>ATTEND LECTURE</MenuLink>
            <MenuLink>COURSE REGISTRATION</MenuLink>
            <MenuLink>SCHEDULE</MenuLink>
            <MenuLink $accent>LOGOUT</MenuLink>
          </Menu>
        </Masthead>
        <Card>
          <CardTitle>YOUR SCHEDULE</CardTitle>
          <Row $head>
            {head.map((h) => (
              <Cell key={h}>{h}</Cell>
            ))}
          </Row>
          <Row>
            {lecture.map((v) => (
              <Cell key={v}>{v}</Cell>
            ))}
          </Row>
        </Card>
      </Page>

      <Taskbar>
        <TaskButton $w={90}>
          <Windows />
        </TaskButton>
        <TaskButton $w={102}>
          <Ring />
        </TaskButton>
        <TaskButton $w={90}>
          <TaskView />
        </TaskButton>
        <TaskButton $first>
          <Explorer />
        </TaskButton>
        <TaskButton>
          <TeamViewer />
        </TaskButton>
        <TaskButton>
          <YellowArrows />
        </TaskButton>
        <TaskButton>
          <CodeTile />
        </TaskButton>
        <TaskButton>
          <VSCode />
        </TaskButton>
        <TaskButton $active>
          <ChromeLogo />
        </TaskButton>
        <TaskButton>
          <Torch />
        </TaskButton>
        <TaskButton>
          <Elephant size={48} />
        </TaskButton>
        <TaskButton>
          <Office color="#1f7244" letter="X">
            <path d="M25 8h14v26H25zM25 14h14M25 20.500h14M25 27h14M32 8v26" fill="none" stroke="#1f7244" strokeWidth="1.800" />
          </Office>
        </TaskButton>
        <TaskButton>
          <Office color="#2b579a" letter="W">
            <path d="M25 9h12M25 13h12M25 17h12M25 21h12M25 25h12M25 29h12M25 33h12" stroke="#2b579a" strokeWidth="1.800" />
          </Office>
        </TaskButton>
        <TaskButton>
          <Office color="#d24726" letter="P">
            <path d="M26 28h12M26 32h12" stroke="#d24726" strokeWidth="2" />
            <path d="M30 11a7 7 0 1 0 7 7h-7z" fill="#d24726" />
            <path d="M32 9a7 7 0 0 1 7 7h-7z" fill="#d24726" />
          </Office>
        </TaskButton>
        <TaskButton>
          <Snip />
        </TaskButton>
        <TaskButton>
          <Wamp w={46} h={46} back="#160c07" />
        </TaskButton>
        <TaskButton>
          <Putty />
        </TaskButton>
        <RunningButton>
          <Sticky />
        </RunningButton>
        <Tray>
          <TaskButton $w={80}>
            <People />
          </TaskButton>
          <TaskButton $w={80}>
            <Caret />
          </TaskButton>
          <TaskButton $w={50}>
            <Battery />
          </TaskButton>
          <TaskButton $w={82}>
            <Wifi />
          </TaskButton>
          <TaskButton $w={40}>
            <Volume />
          </TaskButton>
          <TaskButton $w={104}>
            <Pen />
          </TaskButton>
          <TaskButton $w={56}>
            <Keyboard />
          </TaskButton>
          <Clock>
            <span>1:38 AM</span>
            <span>5/22/2018</span>
          </Clock>
          <TaskButton $w={54}>
            <Notice />
          </TaskButton>
          <ShowDesktop />
        </Tray>
      </Taskbar>
    </Screen>
  );
}
